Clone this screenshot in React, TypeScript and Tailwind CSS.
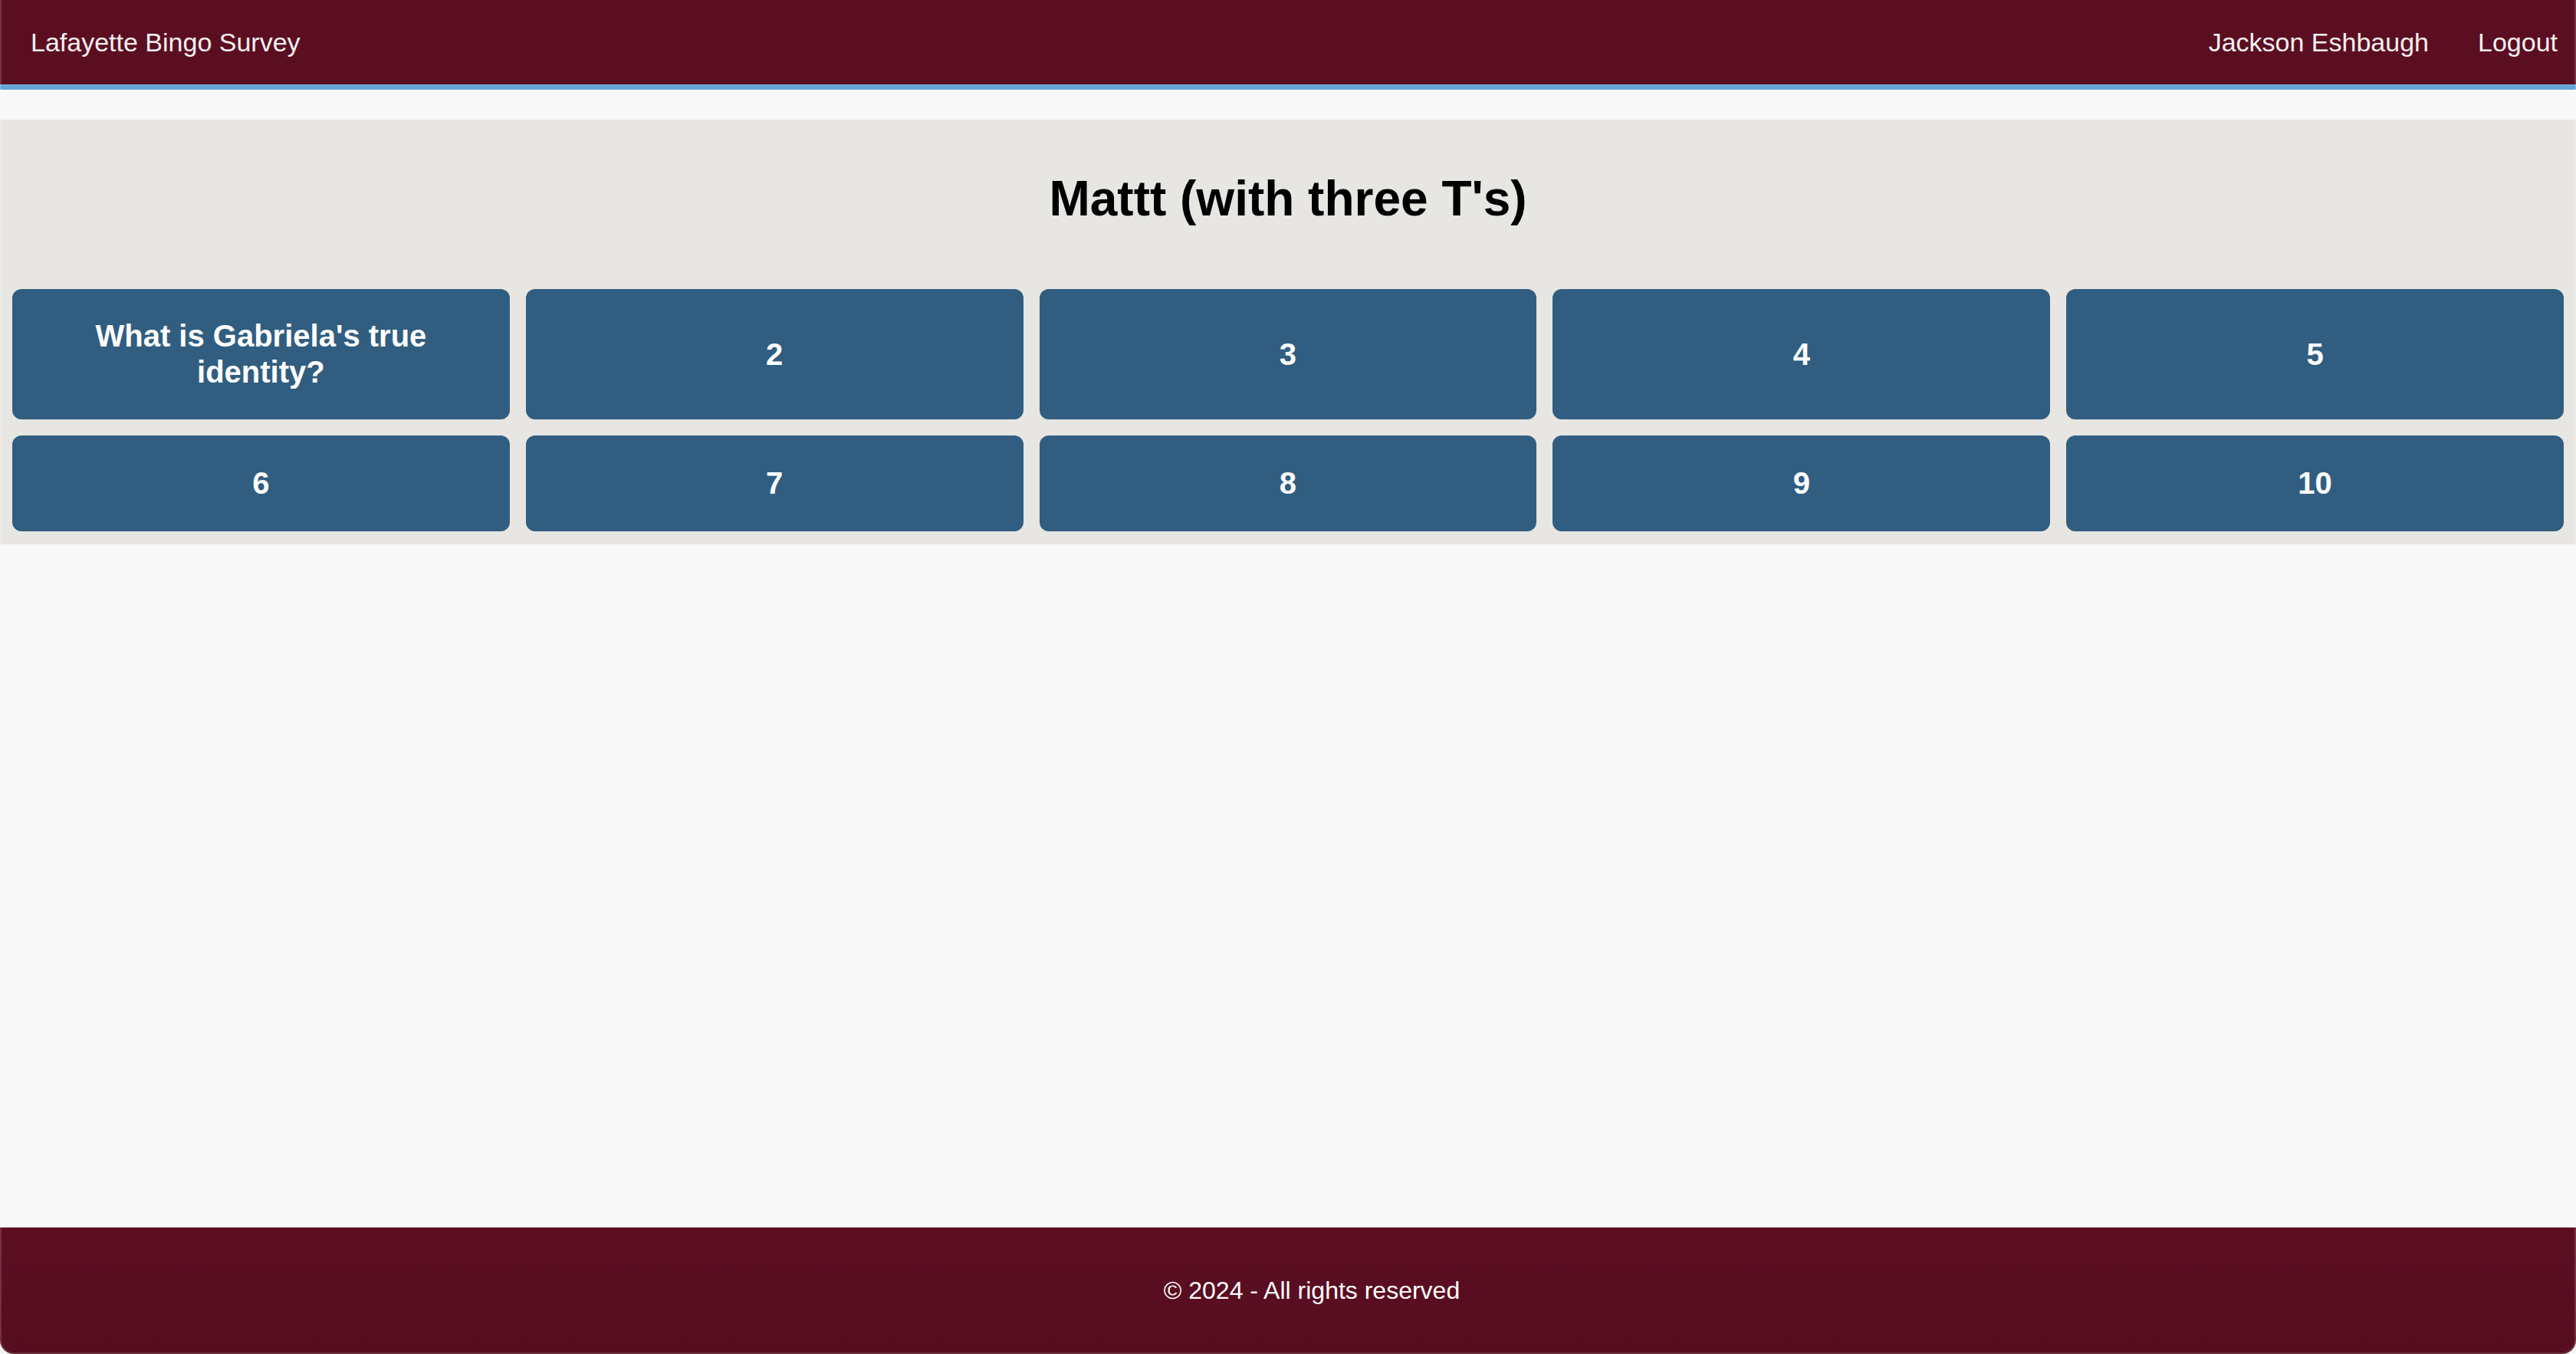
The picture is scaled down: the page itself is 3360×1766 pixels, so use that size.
import React from "react";

const items: string[] = [
  "What is Gabriela's true identity?",
  "2",
  "3",
  "4",
  "5",
  "6",
  "7",
  "8",
  "9",
  "10",
];

function Card({ label }: { label: string }) {
  return (
    <div className="flex-1 min-w-0 min-h-[125px] rounded-[12px] bg-[#315e80] px-[24px] py-[38px] flex items-center justify-center text-center">
      <span className="text-white font-bold text-[40px] leading-[47px]">{label}</span>
    </div>
  );
}

export default function App() {
  const row1 = items.slice(0, 5);
  const row2 = items.slice(5, 10);
  return (
    <div
      className="relative min-h-[1766px] flex flex-col bg-[#f8f8f8] overflow-hidden"
      style={{ fontFamily: '"Liberation Sans", Arial, Helvetica, sans-serif' }}
    >
      <header className="h-[117px] bg-[#5c0e21] border-b-[7px] border-[#67a7d4] flex items-center justify-between pl-[40px] pr-[24px] shrink-0">
        <span className="text-[#f4f0f1] text-[34px] leading-none">Lafayette Bingo Survey</span>
        <nav className="flex items-center gap-[64px]">
          <span className="text-[#f4f0f1] text-[34px] leading-none">Jackson Eshbaugh</span>
          <span className="text-[#f4f0f1] text-[34px] leading-none">Logout</span>
        </nav>
      </header>

      <div className="h-[39px] shrink-0" />

      <section className="bg-[#e7e6e2] pt-[66px] pb-[17px] px-[16px] shrink-0">
        <h1 className="text-center text-black font-bold text-[64px] leading-[74px] mb-[81px]">
          Mattt (with three T's)
        </h1>
        <div className="flex flex-col gap-[21px]">
          <div className="flex gap-[21px]">
            {row1.map((t) => (
              <Card key={t} label={t} />
            ))}
          </div>
          <div className="flex gap-[21px]">
            {row2.map((t) => (
              <Card key={t} label={t} />
            ))}
          </div>
        </div>
      </section>

      <main className="flex-1" />

      <footer className="h-[165px] shrink-0 bg-gradient-to-b from-[#5d0e22] to-[#560d1f] flex items-center justify-center pl-[62px] pb-[2px] rounded-b-[18px]">
        <span className="text-white text-[32px] leading-none">© 2024 - All rights reserved</span>
      </footer>

      <div className="pointer-events-none absolute inset-0 border-x-2 border-b-2 border-white/15 rounded-b-[18px]" />
    </div>
  );
}
